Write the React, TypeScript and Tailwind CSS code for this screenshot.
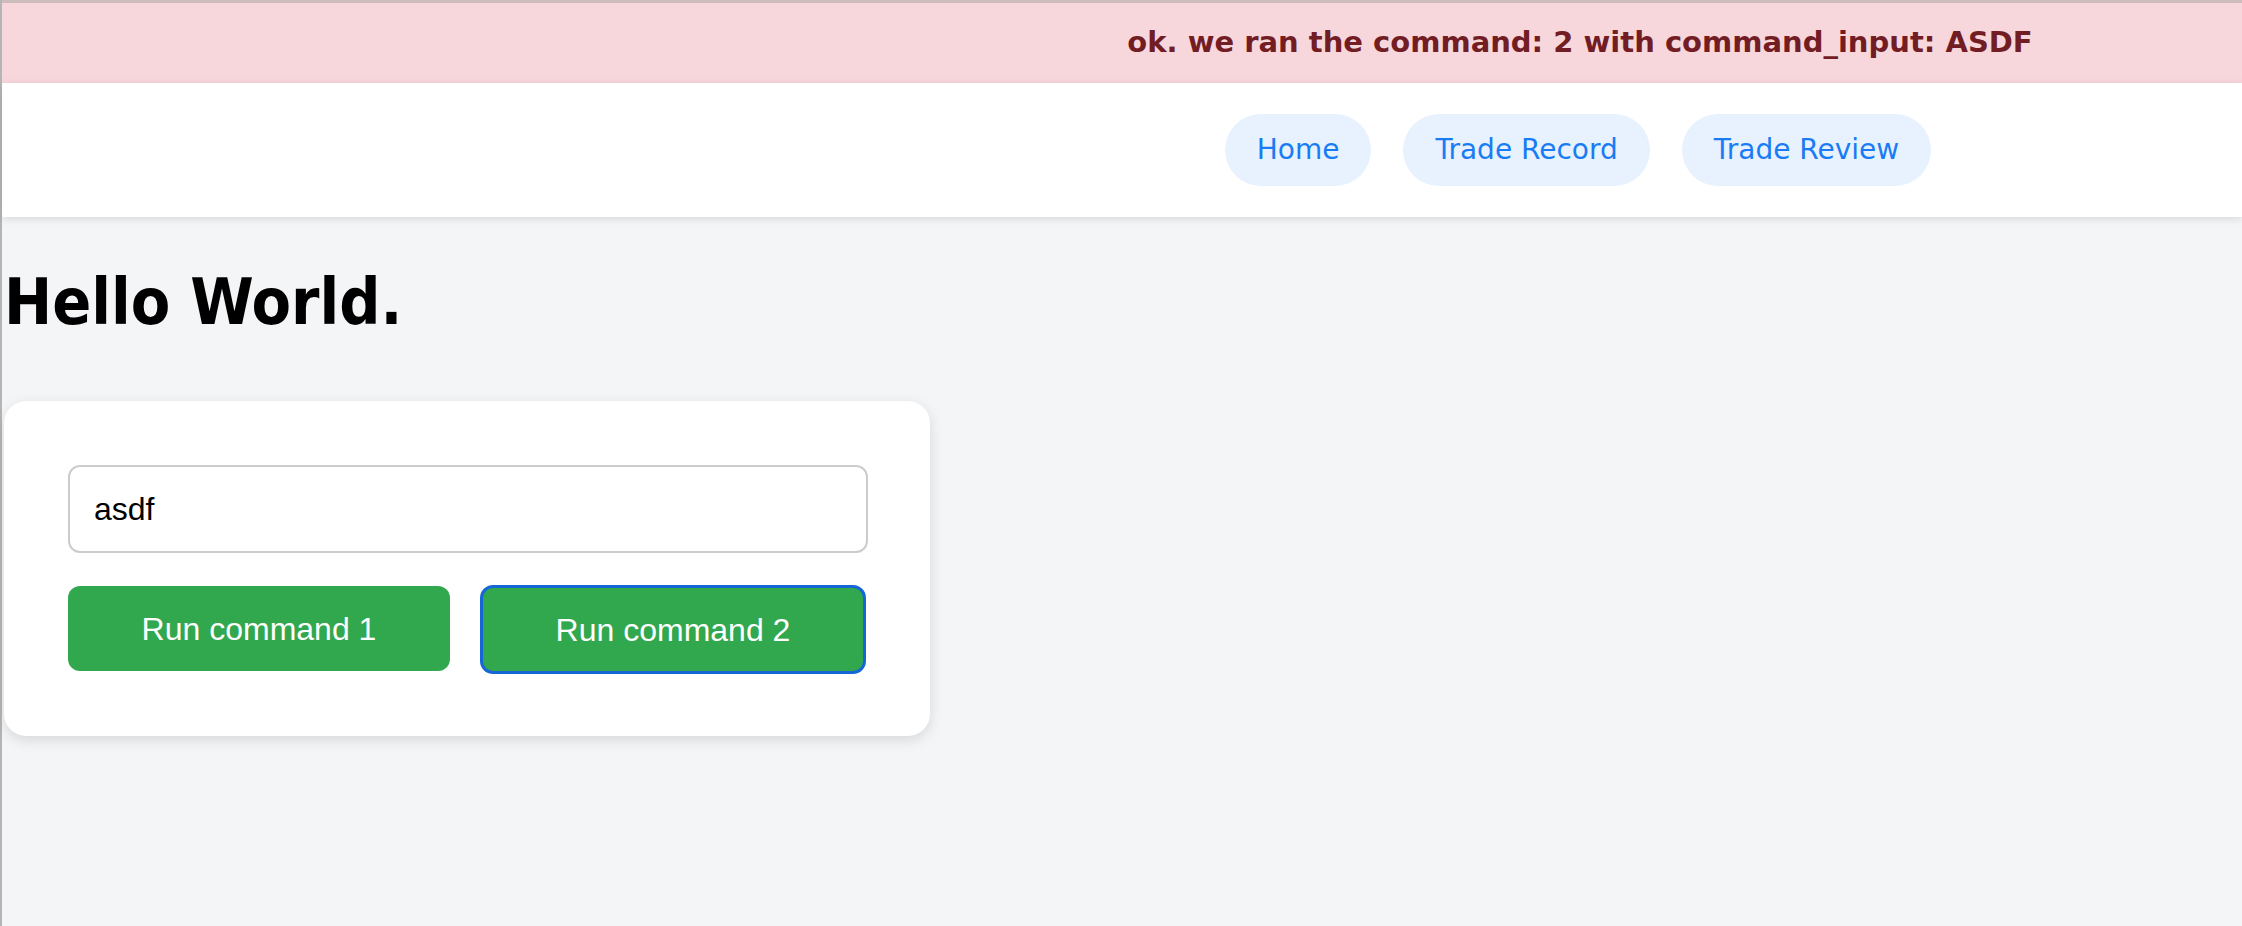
import React from "react";

export default function App() {
  const [value, setValue] = React.useState("asdf");

  return (
    <div className="min-h-[926px] w-full bg-[#f4f5f7] border-l-2 border-[#b5b5b5] font-['DejaVu_Sans',sans-serif]">
      {/* status banner */}
      <div className="h-[83px] border-t-[3px] border-[#cdbcbc] bg-[#f7d7db] flex items-center justify-center pl-[916px]">
        <div className="text-[29px] font-bold text-[#721c24]">
          ok. we ran the command: 2 with command_input: ASDF
        </div>
      </div>

      {/* nav */}
      <div className="h-[134px] bg-white shadow-[0_2px_8px_rgba(0,0,0,0.12)] flex items-center justify-center pl-[912px]">
        <div className="flex gap-[32px]">
          <a className="h-[72px] px-[32px] flex items-center rounded-full bg-[#e8f1fe] text-[#1a7cf5] text-[28px]">Home</a>
          <a className="h-[72px] px-[32px] flex items-center rounded-full bg-[#e8f1fe] text-[#1a7cf5] text-[28px]">Trade Record</a>
          <a className="h-[72px] px-[32px] flex items-center rounded-full bg-[#e8f1fe] text-[#1a7cf5] text-[28px]">Trade Review</a>
        </div>
      </div>

      <h1 className="mt-[53px] ml-[2px] text-[64px] leading-none font-bold text-black font-['DejaVu_Sans_Condensed','DejaVu_Sans',sans-serif]">
        Hello World.
      </h1>

      <div className="mt-[67px] ml-[2px] w-[926px] rounded-[22px] bg-white shadow-[0_4px_14px_rgba(0,0,0,0.12)] px-[64px] pt-[64px] pb-[62px] font-['Liberation_Sans',sans-serif]">
        <input
          value={value}
          onChange={(e) => setValue(e.target.value)}
          className="w-[800px] h-[88px] rounded-[12px] border-2 border-[#cccccc] px-[24px] text-[32px] text-black outline-none"
        />
        <div className="mt-[33px] flex gap-[30px]">
          <button className="w-[384px] h-[85px] rounded-[12px] bg-[#31a84e] text-white text-[32px]">Run command 1</button>
          <button className="w-[388px] h-[89px] -mt-[1px] rounded-[13px] bg-[#31a84e] border-[3px] border-[#1666d6] text-white text-[32px]">Run command 2</button>
        </div>
      </div>
    </div>
  );
}
